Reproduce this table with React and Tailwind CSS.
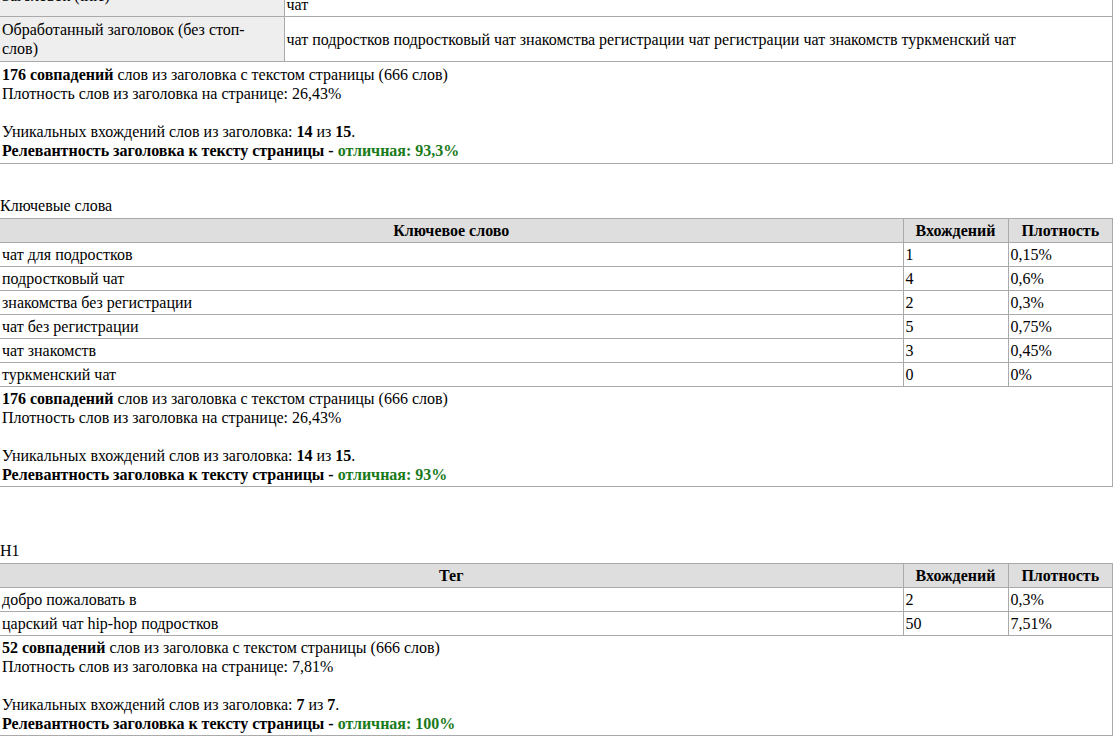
const serif = { fontFamily: '"Liberation Serif", "Times New Roman", serif' };

const cell = "border border-[#aaa] px-[2px] py-[2px] align-middle leading-[19px]";

function Stats({ span, pad = "", matches, density, unique, total, relevance }) {
  return (
    <td colSpan={span} className={`${cell} border-l-0 ${pad}`}>
      <b>{matches} совпадений</b> слов из заголовка с текстом страницы (666 слов)
      <br />
      Плотность слов из заголовка на странице: {density}
      <br />
      <br />
      Уникальных вхождений слов из заголовка: <b>{unique}</b> из <b>{total}</b>.
      <br />
      <b>
        Релевантность заголовка к тексту страницы -{" "}
        <span className="text-[#1a7a1a]">отличная: {relevance}</span>
      </b>
    </td>
  );
}

function WordTable({ title, head, rows, stats }) {
  return (
    <div>
      <div className="leading-[19px] mb-[3px]">{title}</div>
      <table className="w-full border-collapse table-fixed">
        <colgroup>
          <col className="w-[903px]" />
          <col className="w-[105px]" />
          <col />
        </colgroup>
        <thead>
          <tr className="bg-[#dedede]">
            <th className={`${cell} border-l-0 text-center font-bold`}>{head}</th>
            <th className={`${cell} text-center font-bold`}>Вхождений</th>
            <th className={`${cell} text-center font-bold`}>Плотность</th>
          </tr>
        </thead>
        <tbody>
          {rows.map(([word, count, dens]) => (
            <tr key={word}>
              <td className={`${cell} border-l-0`}>{word}</td>
              <td className={cell}>{count}</td>
              <td className={cell}>{dens}</td>
            </tr>
          ))}
          <tr>
            <Stats span={3} {...stats} />
          </tr>
        </tbody>
      </table>
    </div>
  );
}

export default function App() {
  return (
    <div className="bg-white text-black text-[16px] w-[1113px] h-[738px] overflow-hidden" style={serif}>
      <div className="-mt-[27px]">
        <table className="w-full border-collapse table-fixed">
          <colgroup>
            <col className="w-[284px]" />
            <col />
          </colgroup>
          <tbody>
            <tr>
              <td className={`${cell} border-l-0 bg-[#eeeeee]`}>Заголовок (title)</td>
              <td className={cell}>
                Чат для подростков
                <br />
                чат
              </td>
            </tr>
            <tr>
              <td className={`${cell} border-l-0 bg-[#eeeeee] py-[3px] pr-[8px]`}>
                Обработанный заголовок (без стоп-слов)
              </td>
              <td className={`${cell} py-[3px]`}>
                чат подростков подростковый чат знакомства регистрации чат регистрации чат знакомств туркменский чат
              </td>
            </tr>
            <tr>
              <Stats
                span={2}
                pad="py-[3px]"
                matches={176}
                density="26,43%"
                unique={14}
                total={15}
                relevance="93,3%"
              />
            </tr>
          </tbody>
        </table>

        <div className="mt-[32px]">
          <WordTable
            title="Ключевые слова"
            head="Ключевое слово"
            rows={[
              ["чат для подростков", "1", "0,15%"],
              ["подростковый чат", "4", "0,6%"],
              ["знакомства без регистрации", "2", "0,3%"],
              ["чат без регистрации", "5", "0,75%"],
              ["чат знакомств", "3", "0,45%"],
              ["туркменский чат", "0", "0%"],
            ]}
            stats={{ matches: 176, density: "26,43%", unique: 14, total: 15, relevance: "93%" }}
          />
        </div>

        <div className="mt-[54px]">
          <WordTable
            title="H1"
            head="Тег"
            rows={[
              ["добро пожаловать в", "2", "0,3%"],
              ["царский чат hip-hop подростков", "50", "7,51%"],
            ]}
            stats={{ matches: 52, density: "7,81%", unique: 7, total: 7, relevance: "100%" }}
          />
        </div>
      </div>
    </div>
  );
}
